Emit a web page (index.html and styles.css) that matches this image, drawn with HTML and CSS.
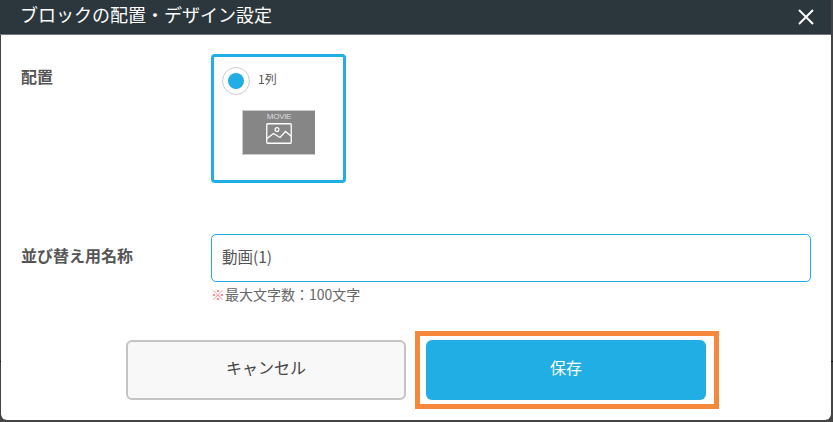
FILE: index.html
```html
<!DOCTYPE html>
<html lang="ja">
<head>
<meta charset="utf-8">
<title>ブロックの配置・デザイン設定</title>
<link rel="stylesheet" href="styles.css">
</head>
<body>
<div class="modal">
  <header class="modal-head">
    <h1 class="modal-title">ブロックの配置・デザイン設定</h1>
    <svg class="close" viewBox="0 0 16 16" width="16" height="16" aria-label="閉じる"><path d="M1 1L15 15M15 1L1 15"/></svg>
  </header>
  <div class="row row-layout">
    <div class="label">配置</div>
    <div class="layout-card">
      <div class="radio-line">
        <span class="radio"><span class="radio-dot"></span></span>
        <span class="radio-text">1列</span>
      </div>
      <div class="thumb">
        <span class="thumb-text">MOVIE</span>
        <svg class="thumb-icon" viewBox="0 0 26 21" width="26" height="21"><rect x="0.75" y="0.75" width="24.5" height="19.5" rx="1"/><circle cx="11" cy="6.5" r="1.9"/><path d="M1 15.5L7.5 10.5L14 14.5L19.5 8.5L25 13"/></svg>
      </div>
    </div>
  </div>
  <div class="row row-name">
    <div class="label">並び替え用名称</div>
    <div class="field">
      <div class="input">動画(1)</div>
      <p class="note"><span class="mark">※</span>最大文字数：100文字</p>
    </div>
  </div>
  <div class="actions">
    <button class="btn btn-cancel" type="button">キャンセル</button>
    <div class="highlight"><button class="btn btn-save" type="button">保存</button></div>
  </div>
</div>
</body>
</html>
```
FILE: styles.css
```css
* { box-sizing: border-box; }
html, body { margin: 0; height: 100%; }
body {
  background: linear-gradient(#111, #111) 0 361px / 100% 1px no-repeat, #444;
  padding: 0 2px 2px 1px;
  overflow: hidden;
  font-family: "Noto Sans CJK JP", "Noto Sans", sans-serif;
  color: #444;
}
.modal {
  height: 420px;
  background: #fff;
  border-radius: 0 0 6px 6px;
}
.modal-head {
  height: 35px;
  margin-left: -1px;
  background: #2b373d;
  border-bottom: 1px solid #777;
  display: flex;
  align-items: center;
  justify-content: space-between;
  padding: 0 17px 6px 20px;
}
.modal-title { margin: 0; font-size: 18px; font-weight: 400; color: #fff; line-height: 26px; }
.close { fill: none; stroke: #fff; stroke-width: 2; margin-top: 6px; }
.row { display: flex; padding-left: 20px; }
.row-layout { padding-top: 19px; height: 199px; }
.label { width: 190px; font-size: 16px; font-weight: 700; line-height: 22px; color: #555; padding-top: 11px; }
.row-name .label { padding-top: 10px; }
.layout-card {
  width: 135px;
  height: 129px;
  border: 3px solid #20aee5;
  border-radius: 4px;
  padding: 10px 8px;
}
.radio-line { display: flex; align-items: center; gap: 8px; }
.radio {
  width: 28px; height: 28px;
  border: 1px solid #ccc;
  border-radius: 50%;
  display: flex; align-items: center; justify-content: center;
}
.radio-dot { width: 16px; height: 16px; border-radius: 50%; background: #20aee5; }
.radio-text { font-size: 12px; color: #555; padding-bottom: 6px; }
.thumb {
  width: 73px; height: 45px;
  margin: 15px 0 0 20px;
  background: #868686;
  border: 1px solid #ccc;
  border-right: 0;
  display: flex; flex-direction: column; align-items: center;
}
.thumb-text { font-size: 8px; line-height: 10px; color: #ddd; font-family: "Liberation Sans", sans-serif; letter-spacing: -0.3px; margin-top: 1px; }
.thumb-icon { fill: none; stroke: #fff; stroke-width: 1.3; margin-top: 1px; }
.field { width: 600px; }
.input {
  height: 48px;
  border: 1px solid #20aee5;
  border-radius: 5px;
  padding: 0 10px;
  font-size: 15.5px;
  line-height: 42px;
  color: #555;
}
.note { margin: 3px 0 0; font-size: 14px; line-height: 18px; color: #666; }
.mark { color: #f77; }
.actions { display: flex; padding: 28px 0 0 125px; }
.btn { font-family: inherit; font-size: 16px; display: block; cursor: pointer; padding: 0 0 6px; }
.btn-cancel {
  width: 280px; height: 60px;
  margin-top: 9px;
  background: #f8f8f8;
  border: 2px solid #c4c4c4;
  border-radius: 6px;
  color: #444;
}
.highlight {
  width: 304px; height: 78px;
  margin-left: 9px;
  border: 5px solid #f5883a;
  padding: 4px 6px;
}
.btn-save {
  width: 280px; height: 60px;
  background: #20aee5;
  border: 0;
  border-radius: 6px;
  color: #fff;
}
```
